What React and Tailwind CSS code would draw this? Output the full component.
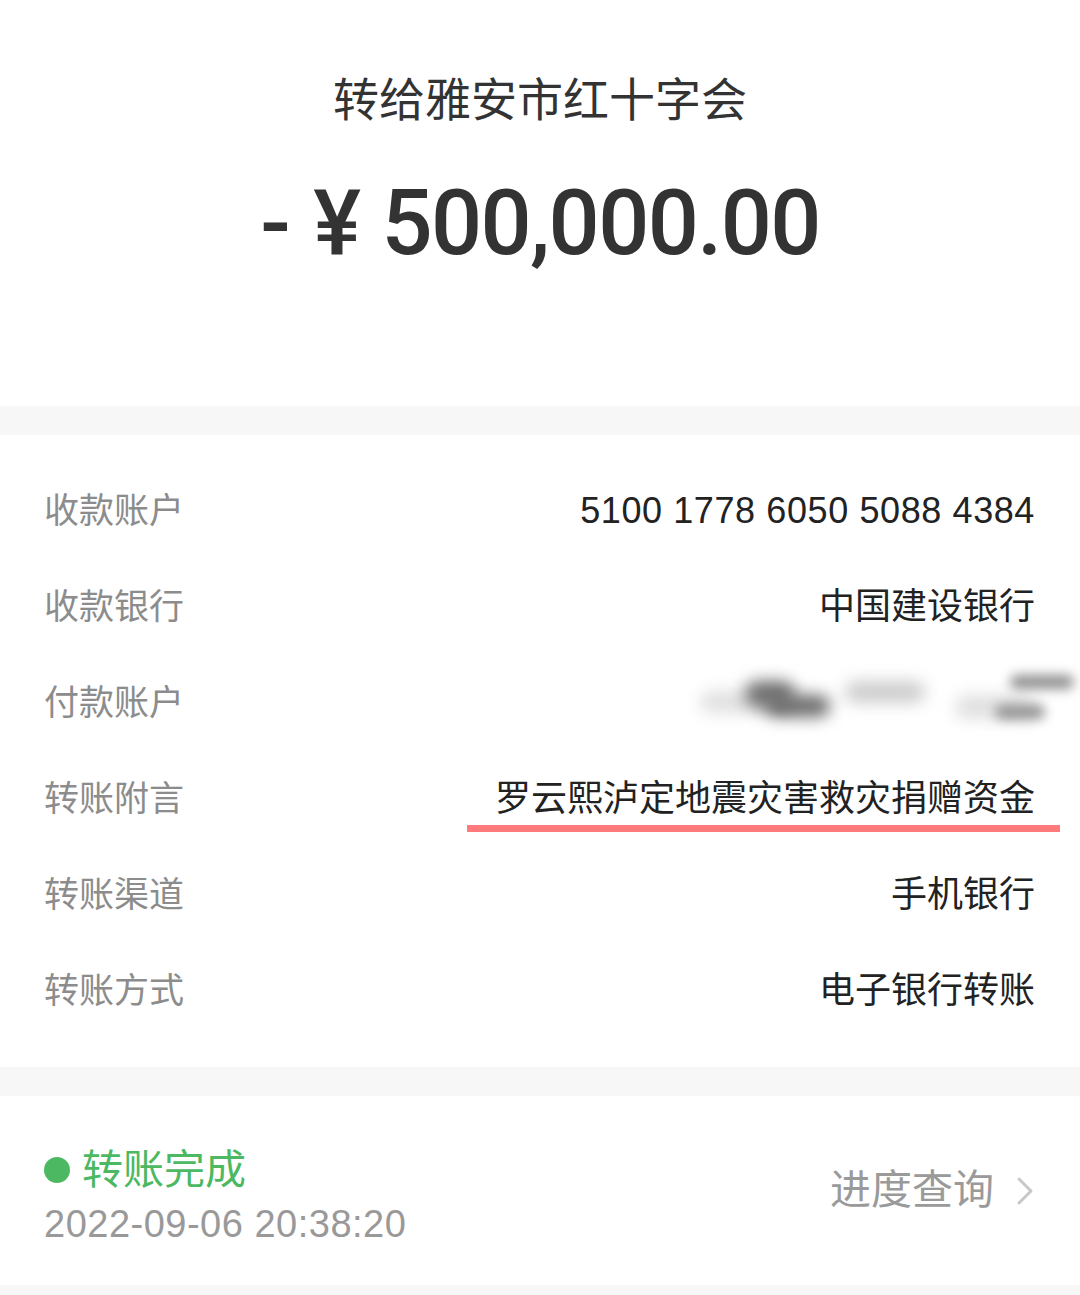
const cjk = { fontFamily: '"Liberation Sans", "Noto Sans CJK SC", sans-serif' };

function Row({ label, children, extra }) {
  return (
    <div className="relative flex h-[96px] items-center justify-between pl-[44px] pr-[45px]">
      <span className="text-[35px] text-[#8c8c8c]">{label}</span>
      {children}
      {extra}
    </div>
  );
}

function Smudge() {
  return (
    <div className="pointer-events-none absolute inset-0">
      <div className="absolute left-[700px] top-[36px] h-[22px] w-[70px] rounded-full bg-[#e0e0e0] blur-[8px]" />
      <div className="absolute left-[745px] top-[26px] h-[26px] w-[50px] rounded-full bg-[#707070] blur-[8px]" />
      <div className="absolute left-[765px] top-[40px] h-[22px] w-[65px] rounded-full bg-[#6a6a6a] blur-[8px]" />
      <div className="absolute left-[845px] top-[26px] h-[22px] w-[80px] rounded-full bg-[#cdcdcd] blur-[8px]" />
      <div className="absolute left-[955px] top-[40px] h-[24px] w-[80px] rounded-full bg-[#e0e0e0] blur-[8px]" />
      <div className="absolute left-[1010px] top-[20px] h-[14px] w-[64px] rounded-full bg-[#8f8f8f] blur-[6px]" />
      <div className="absolute left-[995px] top-[50px] h-[14px] w-[50px] rounded-full bg-[#929292] blur-[6px]" />
    </div>
  );
}

export default function App() {
  return (
    <div className="min-h-[1295px] w-[1080px] bg-white" style={cjk}>
      <div className="flex h-[406px] flex-col items-center">
        <h1 className="mt-[72px] text-[46px] leading-[56px] text-[#333333]">转给雅安市红十字会</h1>
        <div className="mt-[46px] flex items-center text-[90px] font-medium leading-[100px] tracking-[-1.6px] text-[#333333]" style={{ fontFamily: 'Roboto, "Liberation Sans", sans-serif' }}>
          <span>-</span>
          <span className="ml-[24px]">¥</span>
          <span className="ml-[22px]">500,000.00</span>
        </div>
      </div>

      <div className="h-[29px] bg-[#f7f7f7]" />

      <div className="py-[28px]">
        <Row label="收款账户">
          <span className="text-[36px] tracking-[0.6px] text-[#222222]">5100 1778 6050 5088 4384</span>
        </Row>
        <Row label="收款银行">
          <span className="text-[36px] text-[#222222]">中国建设银行</span>
        </Row>
        <Row label="付款账户" extra={<Smudge />}>
          <span />
        </Row>
        <Row
          label="转账附言"
          extra={<div className="absolute left-[467px] top-[74px] h-[7px] w-[593px] bg-[#ff7a7a]" />}
        >
          <span className="text-[36px] text-[#222222]">罗云熙泸定地震灾害救灾捐赠资金</span>
        </Row>
        <Row label="转账渠道">
          <span className="text-[36px] text-[#222222]">手机银行</span>
        </Row>
        <Row label="转账方式">
          <span className="text-[36px] text-[#222222]">电子银行转账</span>
        </Row>
      </div>

      <div className="h-[29px] bg-[#f7f7f7]" />

      <div className="flex h-[189px] items-center justify-between pl-[44px] pr-[46px]">
        <div className="mt-[8px] flex flex-col">
          <div className="flex items-center">
            <span className="h-[26px] w-[26px] rounded-full bg-[#4cb862]" />
            <span className="ml-[12px] text-[41px] leading-[52px] text-[#4cb862]">转账完成</span>
          </div>
          <span className="mt-[6px] text-[38px] leading-[44px] tracking-[0.5px] text-[#999999]">2022-09-06 20:38:20</span>
        </div>
        <div className="flex items-center">
          <span className="text-[41px] text-[#9a9a9a]">进度查询</span>
          <svg className="ml-[22px]" width="18" height="30" viewBox="0 0 18 30" fill="none">
            <path d="M3 3 L15 15 L3 27" stroke="#c8c8c8" strokeWidth="3" strokeLinecap="round" strokeLinejoin="round" />
          </svg>
        </div>
      </div>

      <div className="h-[10px] bg-[#f7f7f7]" />
    </div>
  );
}
